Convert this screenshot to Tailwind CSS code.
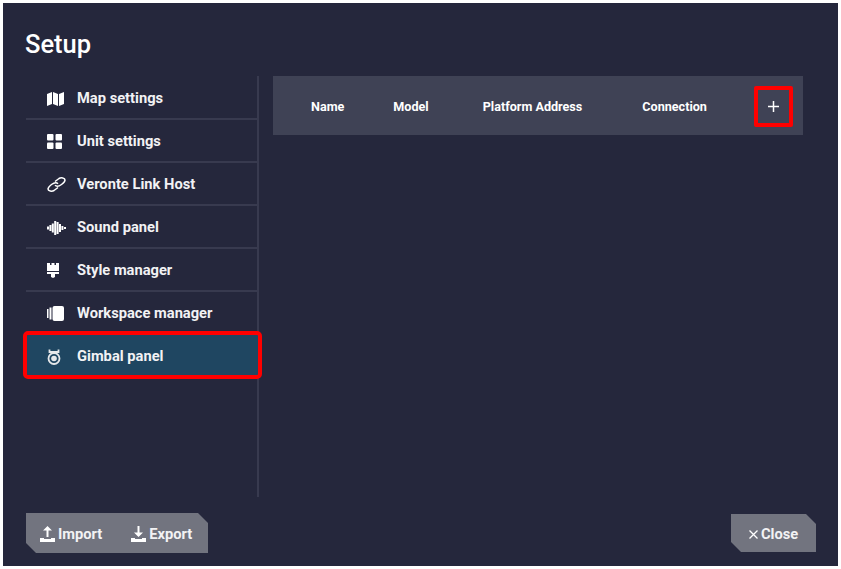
<!DOCTYPE html>
<html lang="en">
  <head>
    <meta charset="UTF-8" />
    <title>Setup</title>
    <script src="https://cdn.jsdelivr.net/npm/@tailwindcss/browser@4"></script>
  </head>
  <body class="bg-white font-['Roboto',sans-serif] text-[#f2f2f4]">
    <div class="w-[841px] h-[569px] p-[3px]">
      <div class="w-[835px] h-[563px] bg-[#25273c] flex flex-col pl-[23px] pr-[22px]">
        <h1 class="h-[73px] pt-[25px] -ml-[1px] text-[25.5px] leading-[32px] font-medium text-white">Setup</h1>

        <div class="flex h-[421px]">
          <!-- Menu -->
          <nav class="w-[233px] pt-[1px] border-r-2 border-[#383a4f] text-[14.7px] font-bold">
            <div class="h-[43px] pt-[2px] flex items-center border-b-2 border-[#383a4f]">
              <div class="ml-[21px] w-[30px] shrink-0"><svg class="w-[17px] h-[14px]" viewBox="0 0 17 14" fill="#fff"><path d="M0 2 5 0v12l-5 2zM6 0l5 2v12l-5-2zM12 2l5-2v12l-5 2z"/></svg></div>
              <span>Map settings</span>
            </div>
            <div class="h-[43px] pt-[2px] flex items-center border-b-2 border-[#383a4f]">
              <div class="ml-[21px] w-[30px] shrink-0"><svg class="w-[15px] h-[15px]" viewBox="0 0 15 15" fill="#fff"><rect width="6.500" height="6.500" rx="1"/><rect x="8.500" width="6.500" height="6.500" rx="1"/><rect y="8.500" width="6.500" height="6.500" rx="1"/><rect x="8.500" y="8.500" width="6.500" height="6.500" rx="1"/></svg></div>
              <span>Unit settings</span>
            </div>
            <div class="h-[43px] pt-[2px] flex items-center border-b-2 border-[#383a4f]">
              <div class="ml-[21px] w-[30px] shrink-0"><svg class="w-[19px] h-[15px]" viewBox="0 0 19 15" fill="none" stroke="#fff" stroke-width="1.500"><path d="M8 4.500 12 1.500c2-1.200 6-.8 6 1.500 0 1.500-1.500 3-3.500 4.500-2.500 1.800-5 2.200-6.500.8"/><path d="M11 10.500 7 13.500c-2 1.200-6 .8-6-1.500 0-1.500 1.500-3 3.500-4.500 2.500-1.800 5-2.200 6.500-.8"/></svg></div>
              <span>Veronte Link Host</span>
            </div>
            <div class="h-[43px] pt-[2px] flex items-center border-b-2 border-[#383a4f]">
              <div class="ml-[21px] w-[30px] shrink-0"><svg class="w-[19px] h-[14px]" viewBox="0 0 19 14" stroke="#fff" stroke-width="2"><path d="M1 5.500v3M3.400 4v6M5.800 2.500v9M8.200 0v14M10.600 1v12M13 3v8M15.400 5v4M18 6v2"/></svg></div>
              <span>Sound panel</span>
            </div>
            <div class="h-[43px] pt-[2px] flex items-center border-b-2 border-[#383a4f]">
              <div class="ml-[21px] w-[30px] shrink-0"><svg class="w-[12px] h-[15px]" viewBox="0 0 12 15" fill="#fff"><path d="M0 0h3v2h1.500V0h3v2H9V0h3v8H0zM0 9h12v2H8v3l-2 1-2-1v-3H0z"/></svg></div>
              <span>Style manager</span>
            </div>
            <div class="h-[43px] flex items-center">
              <div class="ml-[21px] w-[30px] shrink-0"><svg class="w-[17px] h-[15px]" viewBox="0 0 17 15" fill="#fff"><rect y="3" width="1.500" height="9"/><rect x="2.500" y="1.500" width="2" height="12"/><rect x="5.500" width="11.500" height="15" rx="2"/></svg></div>
              <span>Workspace manager</span>
            </div>
            <div class="h-[40px] pt-[3px] ml-[1px] -mr-[1px] flex items-center bg-[#1f4661] outline-4 outline-[#f00] rounded-[1px]">
              <div class="ml-[20px] w-[30px] shrink-0"><svg class="w-[14px] h-[16px]" viewBox="0 0 14 16" fill="none" stroke="#e6e8ea"><path d="M2.500 .500v2.500h9V.500" stroke-width="1.800"/><circle cx="7" cy="9.500" r="5.500" stroke-width="1.800"/><circle cx="7" cy="9.500" r="2.800" fill="#e6e8ea" stroke="none"/></svg></div>
              <span>Gimbal panel</span>
            </div>
          </nav>

          <!-- Gimbal table header -->
          <div class="ml-[14px] w-[530px]">
            <div class="h-[59px] pt-[4px] bg-[#3f4255] flex items-center text-[12.6px] font-bold text-white">
              <span class="ml-[38px]">Name</span>
              <span class="ml-[49px]">Model</span>
              <span class="ml-[54px]">Platform Address</span>
              <span class="ml-[60px]">Connection</span>
              <button class="ml-auto mr-[10px] mb-[2px] w-[39px] h-[41px] border-4 border-[#f00] rounded-[2px] flex items-center justify-center">
                <svg class="w-[11px] h-[11px]" viewBox="0 0 11 11" stroke="#fff" stroke-width="1.500"><path d="M5.500 0v11M0 5.500h11"/></svg>
              </button>
            </div>
          </div>
        </div>

        <!-- Footer buttons -->
        <div class="mt-[16px] flex justify-between text-[14.7px] font-bold">
          <div class="w-[182px] h-[40px] pt-[2px] bg-[#72747f] flex items-center [clip-path:polygon(0_0,172px_0,100%_10px,100%_100%,10px_100%,0_30px)]">
            <svg class="ml-[14px] w-[15px] h-[16px]" viewBox="0 0 15 16" fill="#fff"><path d="M7.500 0 12 4.500H8.500V11h-2V4.500H3z"/><path d="M0 12h4v1h7v-1h4v4H0z"/></svg>
            <span class="ml-[3px]">Import</span>
            <svg class="ml-[29px] w-[15px] h-[16px]" viewBox="0 0 15 16" fill="#fff"><path d="M6.500 0h2v6.500H12L7.500 11 3 6.500h3.500z"/><path d="M0 12h4v1h7v-1h4v4H0z"/></svg>
            <span class="ml-[3px]">Export</span>
          </div>
          <div class="w-[85px] h-[38px] pt-[2px] mt-[1px] bg-[#72747f] flex items-center [clip-path:polygon(0_0,75px_0,100%_10px,100%_100%,10px_100%,0_28px)]">
            <svg class="ml-[18px] w-[9px] h-[9px]" viewBox="0 0 9 9" stroke="#fff" stroke-width="1.300"><path d="M.5.500l8 8M8.500.500l-8 8"/></svg>
            <span class="ml-[3px]">Close</span>
          </div>
        </div>
      </div>
    </div>
  </body>
</html>
